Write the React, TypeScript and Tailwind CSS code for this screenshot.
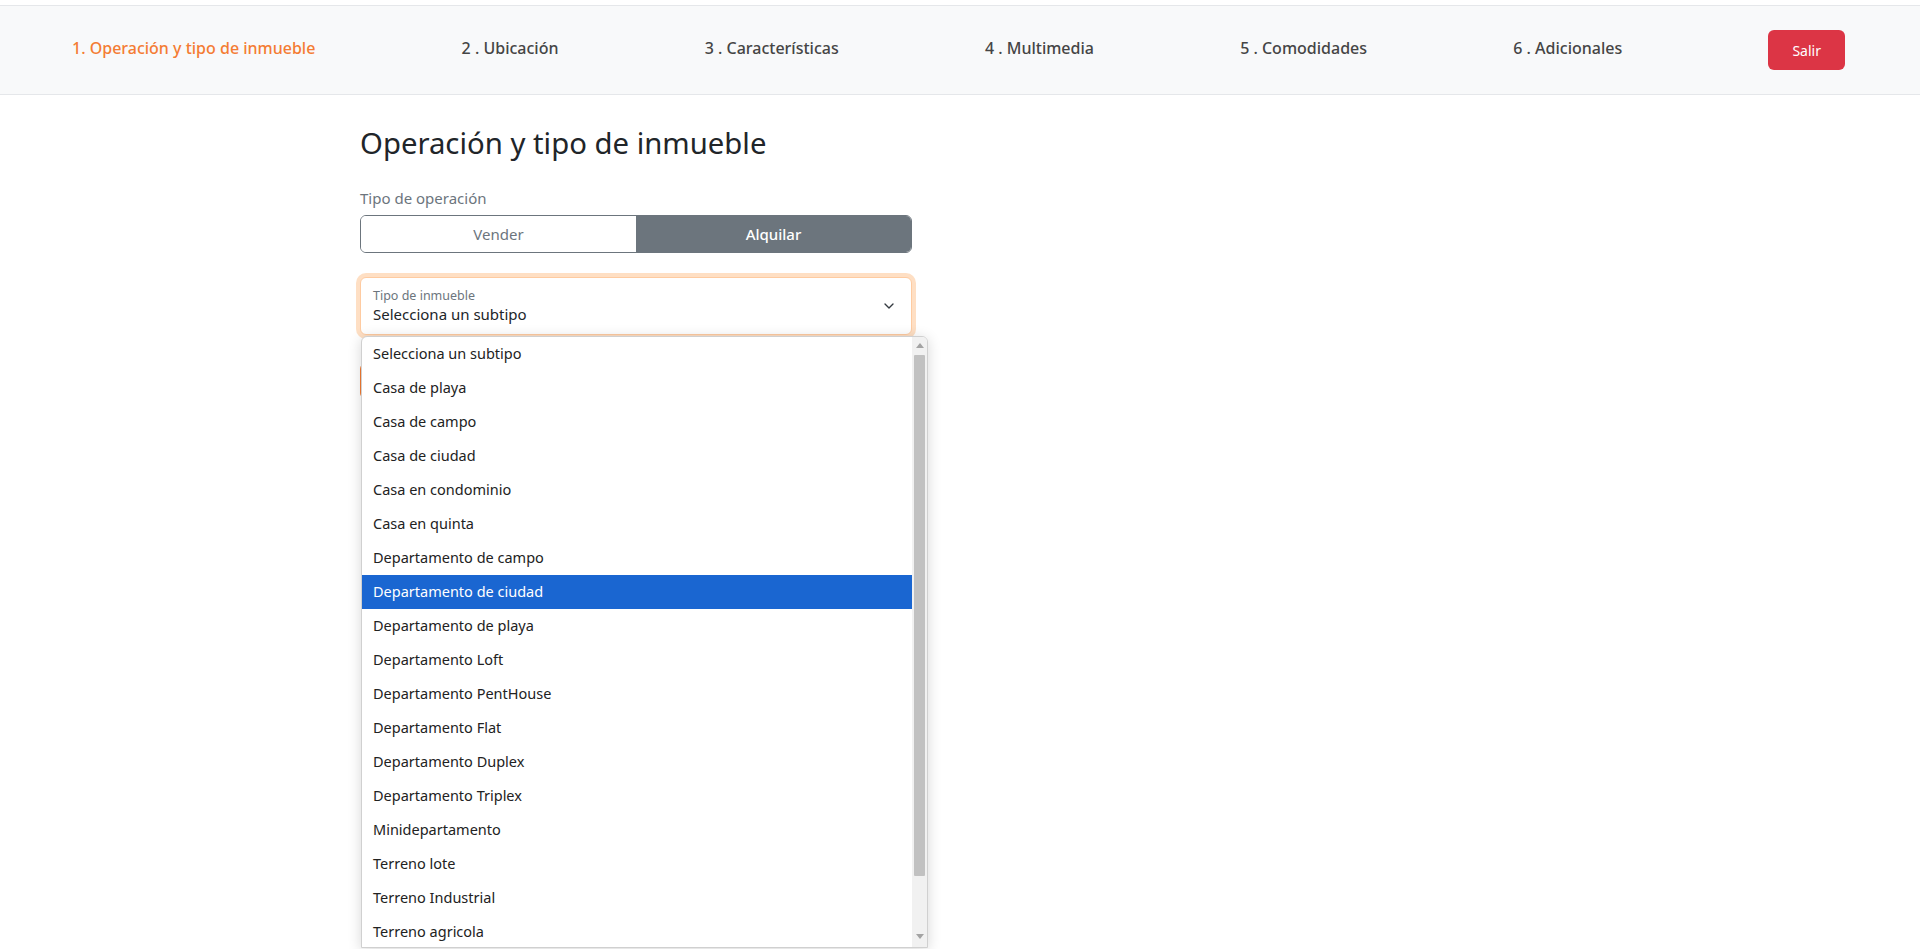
import { ChevronDown } from 'lucide-react'

const steps = [
  '1. Operación y tipo de inmueble',
  '2 . Ubicación',
  '3 . Características',
  '4 . Multimedia',
  '5 . Comodidades',
  '6 . Adicionales',
]

const subtipos = [
  'Selecciona un subtipo',
  'Casa de playa',
  'Casa de campo',
  'Casa de ciudad',
  'Casa en condominio',
  'Casa en quinta',
  'Departamento de campo',
  'Departamento de ciudad',
  'Departamento de playa',
  'Departamento Loft',
  'Departamento PentHouse',
  'Departamento Flat',
  'Departamento Duplex',
  'Departamento Triplex',
  'Minidepartamento',
  'Terreno lote',
  'Terreno Industrial',
  'Terreno agricola',
]

const font = { fontFamily: '"Noto Sans", "Open Sans", sans-serif' }

const Header = () => (
  <div className="pt-[5px]">
    <nav className="flex h-[90px] items-center justify-between border-y border-[#e5e7ea] bg-[#f8f9fa] pl-[72px] pr-[75px]">
      {steps.map((s, i) => (
        <span
          key={s}
          className={`mb-[5px] text-[16px] font-medium ${i === 0 ? 'text-[#f47c33]' : 'text-[#454545]'}`}
        >
          {s}
        </span>
      ))}
      <button className="h-10 rounded-md bg-[#dc3545] px-6 text-[14px] text-white">Salir</button>
    </nav>
  </div>
)

const Dropdown = () => (
  <div className="absolute left-[1px] top-[59px] z-10 flex h-[612px] w-[567px] overflow-hidden rounded-t-[6px] border border-[#d0d0d0] bg-white shadow-[0_2px_14px_rgba(0,0,0,0.16)]">
    <ul className="flex-1">
      {subtipos.map((t, i) => (
        <li
          key={t}
          className={`flex h-[34px] items-center px-[11px] text-[14.5px] ${
            i === 7 ? 'bg-[#1a66d1] text-white' : 'text-[#222]'
          }`}
        >
          {t}
        </li>
      ))}
    </ul>
    <div className="flex w-[15px] flex-col items-center bg-[#f1f1f1]">
      <svg width="8" height="16" viewBox="0 0 8 16" className="shrink-0">
        <path d="M0 11 L4 6 L8 11 Z" fill="#a3a3a3" />
      </svg>
      <div className="mt-[2px] h-[521px] w-[11px] rounded-[1px] bg-[#c1c1c1]" />
      <div className="flex-1" />
      <svg width="8" height="16" viewBox="0 0 8 16" className="mb-[2px] shrink-0">
        <path d="M0 5 L4 10 L8 5 Z" fill="#a3a3a3" />
      </svg>
    </div>
  </div>
)

export default function App() {
  return (
    <div className="h-[949px] overflow-hidden bg-white" style={font}>
      <Header />
      <main className="pl-[360px] pt-[30px]">
        <div className="w-[552px]">
          <h2 className="text-[29.3px] leading-[36px] font-normal text-[#212529]">
            Operación y tipo de inmueble
          </h2>
          <p className="mt-[26px] text-[15px] leading-[22px] text-[#6c757d]">Tipo de operación</p>
          <div className="mt-[6px] flex h-[38px] overflow-hidden rounded-md border border-[#6c757d]">
            <button className="flex-1 bg-white text-[15px] text-[#6c757d]">Vender</button>
            <button className="flex-1 bg-[#6c757d] text-[15px] font-medium text-white">Alquilar</button>
          </div>

          <div className="relative mt-[24px]">
            <div className="flex h-[58px] items-center rounded-md border border-[#fecba1] bg-white pl-3 pr-[14px] shadow-[0_0_0_4px_rgba(253,126,20,0.25)]">
              <div className="flex-1">
                <div className="text-[12.5px] leading-[16px] text-[#6c757d]">Tipo de inmueble</div>
                <div className="text-[15px] leading-[20px] text-[#212529]">Selecciona un subtipo</div>
              </div>
              <ChevronDown size={16} strokeWidth={2} className="text-[#343a40]" />
            </div>
            <Dropdown />
          </div>

          <button className="mt-[28px] h-[36px] w-full rounded-md bg-[#f47c33] text-[15px] text-white">
            Siguiente
          </button>
        </div>
      </main>
    </div>
  )
}
